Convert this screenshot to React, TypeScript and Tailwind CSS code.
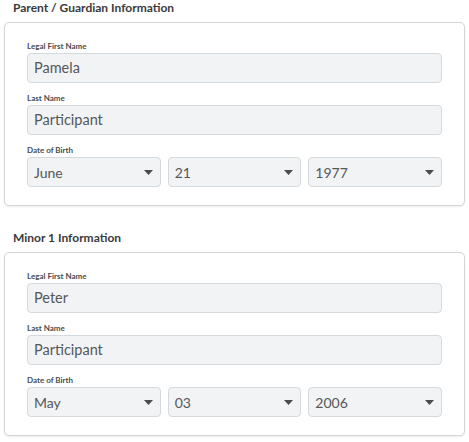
import React from "react";

function Caret() {
  return (
    <svg width="9" height="5" viewBox="0 0 9 5" className="shrink-0">
      <path d="M0 0 L9 0 L4.5 5 Z" fill="#494c4e" />
    </svg>
  );
}

function Label({ children }: { children: React.ReactNode }) {
  return (
    <div className="h-[13px] leading-[13px] text-[8px] font-bold text-[#494c4e]">
      {children}
    </div>
  );
}

function TextField({ label, value }: { label: string; value: string }) {
  return (
    <div className="flex flex-col">
      <Label>{label}</Label>
      <div className="h-[30px] flex items-center px-[6px] rounded-[4px] border border-[#d3d9dc] bg-[#f1f3f4] text-[14.5px] text-[#55585b]">
        {value}
      </div>
    </div>
  );
}

function Select({ value }: { value: string }) {
  return (
    <div className="h-[30px] flex items-center justify-between pl-[6px] pr-[7px] rounded-[4px] border border-[#d3d9dc] bg-[#f1f3f4] text-[14px] text-[#55585b]">
      <span>{value}</span>
      <Caret />
    </div>
  );
}

function Section({
  title,
  first,
  last,
  month,
  day,
  year,
}: {
  title: string;
  first: string;
  last: string;
  month: string;
  day: string;
  year: string;
}) {
  return (
    <div className="flex flex-col">
      <div className="pl-[9px] h-[16px] leading-[16px] text-[12px] font-bold text-[#3a3a3a]">
        {title}
      </div>
      <div className="mt-[6px] rounded-[5px] border border-[#d6d6d6] bg-white shadow-[0_1px_2px_rgba(0,0,0,0.08)] px-[22px] pt-[17px] pb-[18px] flex flex-col gap-[9px]">
        <TextField label="Legal First Name" value={first} />
        <TextField label="Last Name" value={last} />
        <div className="flex flex-col">
          <Label>Date of Birth</Label>
          <div className="grid grid-cols-3 gap-[7px]">
            <Select value={month} />
            <Select value={day} />
            <Select value={year} />
          </div>
        </div>
      </div>
    </div>
  );
}

export default function App() {
  return (
    <div
      className="w-[469px] h-[442px] bg-white px-[4px] flex flex-col gap-[24px]"
      style={{ fontFamily: "Lato, 'Liberation Sans', sans-serif" }}
    >
      <Section
        title="Parent / Guardian Information"
        first="Pamela"
        last="Participant"
        month="June"
        day="21"
        year="1977"
      />
      <Section
        title="Minor 1 Information"
        first="Peter"
        last="Participant"
        month="May"
        day="03"
        year="2006"
      />
    </div>
  );
}
